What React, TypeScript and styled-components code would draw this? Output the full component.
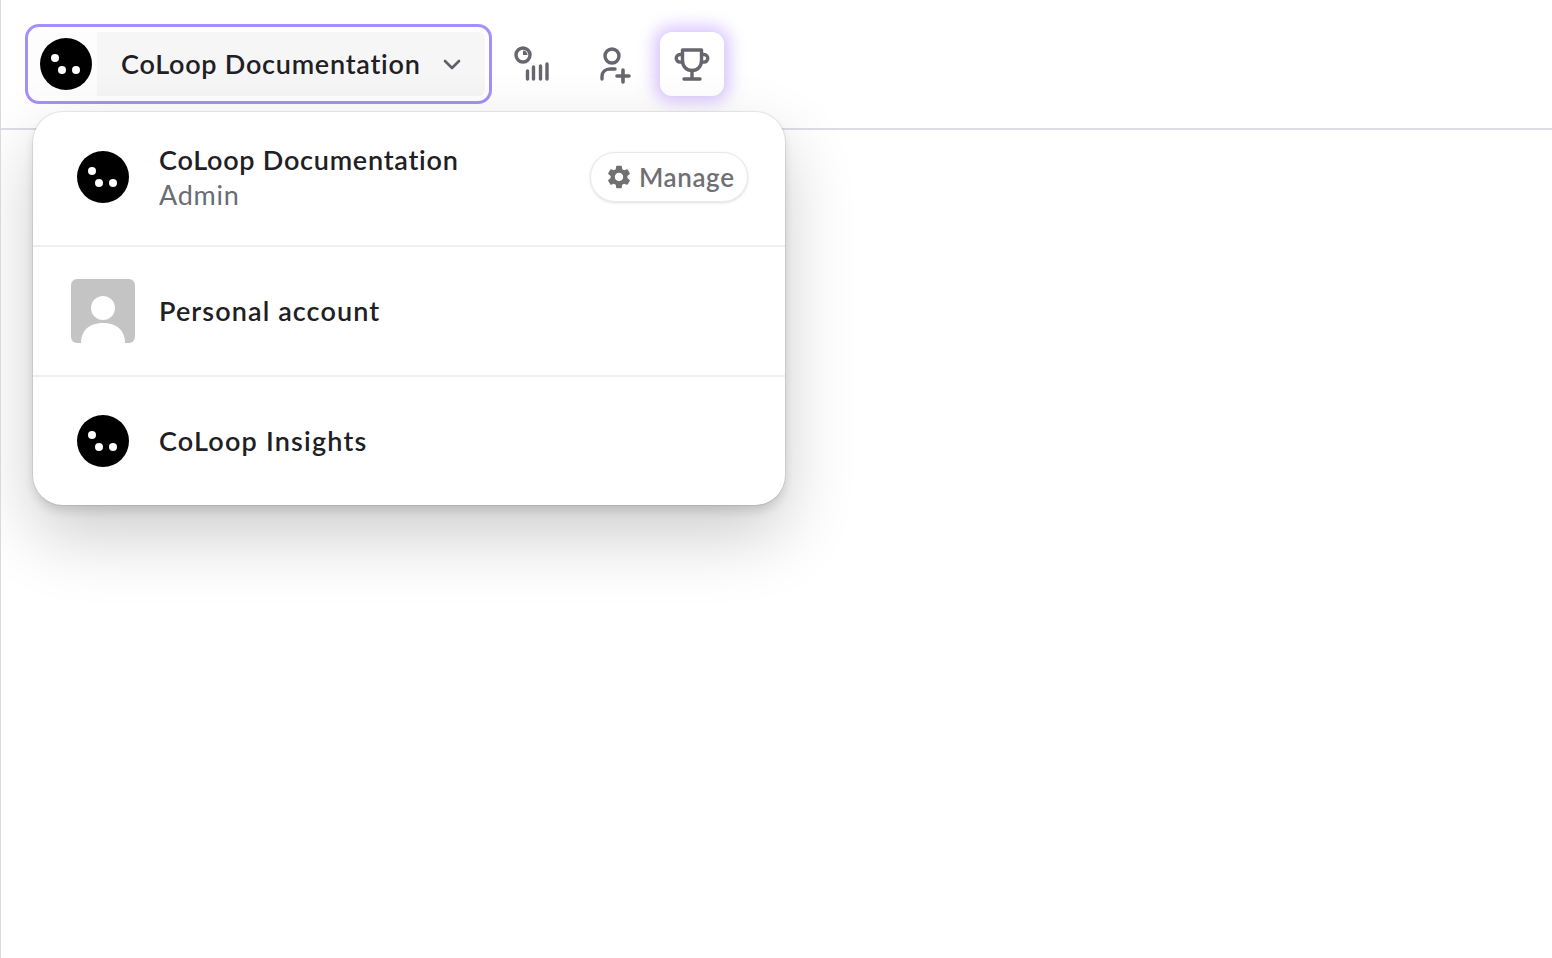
import styled, { createGlobalStyle } from 'styled-components';
import { MdSettings } from 'react-icons/md';

const FONT = `"Lato", "Inter", "Liberation Sans", sans-serif`;

const GlobalStyle = createGlobalStyle`
  html, body {
    margin: 0;
    padding: 0;
    height: 100%;
    background: #fff;
    font-family: ${FONT};
  }
  #root {
    height: 100%;
  }
`;

const Page = styled.div`
  position: relative;
  height: 958px;
  box-sizing: border-box;
  border-left: 1px solid #d9d9e3;
  overflow: hidden;
`;

const Header = styled.header`
  display: flex;
  align-items: center;
  box-sizing: border-box;
  height: 130px;
  padding: 0 0 0 24px;
  border-bottom: 2px solid #dddde6;
`;

const Switcher = styled.button`
  display: flex;
  align-items: center;
  box-sizing: border-box;
  width: 467px;
  height: 80px;
  padding: 0;
  border: 3px solid #a78ffa;
  border-radius: 14px;
  background: #fff;
  outline: none;
  font-family: ${FONT};
`;

const SwitcherInner = styled.span`
  display: flex;
  align-items: center;
  flex: 1;
  height: 64px;
  margin: 0 4px;
  border-radius: 6px;
  background: #f6f6f7;
`;

const LogoTile = styled.span`
  display: flex;
  align-items: center;
  justify-content: center;
  flex: none;
  box-sizing: border-box;
  width: 65px;
  height: 64px;
  padding-left: 3px;
  border-radius: 6px 0 0 6px;
  background: #fdfdfd;
`;

const SwitcherLabel = styled.span`
  flex: 1;
  margin: 0 0 2px 24px;
  text-align: left;
  font-size: 27px;
  font-weight: 600;
  letter-spacing: 0.75px;
  color: #1f2024;
`;

const Chevron = styled.svg`
  flex: none;
  margin-right: 22px;
`;

const IconButton = styled.button<{ $active?: boolean; $offset: number }>`
  display: flex;
  align-items: center;
  justify-content: center;
  flex: none;
  width: 64px;
  height: 64px;
  margin-left: ${(p) => p.$offset}px;
  padding: 0;
  border: none;
  border-radius: 12px;
  background: #fff;
  box-shadow: ${(p) => (p.$active ? '0 0 16px 6px rgba(167, 120, 250, 0.42)' : 'none')};
`;

const Menu = styled.div`
  position: absolute;
  top: 112px;
  left: 32px;
  width: 752px;
  height: 393px;
  display: flex;
  flex-direction: column;
  border-radius: 30px;
  background: #fff;
  box-shadow: 0 0 0 1px rgba(0, 0, 0, 0.07), 0 6px 10px rgba(0, 0, 0, 0.12), 0 30px 70px rgba(0, 0, 0, 0.2);
`;

const Row = styled.div<{ $height: number; $lift?: number }>`
  display: flex;
  align-items: center;
  gap: 24px;
  box-sizing: border-box;
  height: ${(p) => p.$height}px;
  flex: none;
  padding: 0 37px ${(p) => p.$lift ?? 0}px 38px;
  & + & {
    border-top: 2px solid #efeff1;
  }
`;

const LogoSlot = styled.span`
  display: flex;
  align-items: center;
  justify-content: center;
  flex: none;
  width: 64px;
  height: 64px;
`;

const Avatar = styled.svg`
  display: block;
  border-radius: 6px;
`;

const Info = styled.div`
  display: flex;
  flex-direction: column;
  flex: 1;
  gap: 1px;
`;

const Name = styled.div<{ $tracking: number }>`
  font-size: 27px;
  line-height: 34px;
  font-weight: 600;
  letter-spacing: ${(p) => p.$tracking}px;
  color: #1f2024;
`;

const Role = styled.div`
  font-size: 27px;
  line-height: 34px;
  font-weight: 400;
  letter-spacing: 0.75px;
  color: #6b6b74;
`;

const ManageButton = styled.button`
  display: flex;
  align-items: center;
  gap: 6px;
  box-sizing: border-box;
  width: 158px;
  height: 50px;
  padding: 0 0 0 14px;
  border: 1px solid #e9e9ec;
  border-radius: 25px;
  background: #fff;
  box-shadow: 0 1px 3px rgba(0, 0, 0, 0.13);
  font-family: ${FONT};
  font-size: 26px;
  font-weight: 600;
  letter-spacing: 0.6px;
  color: #6f6f74;
  svg {
    flex: none;
  }
`;

const Logo = () => (
  <svg width="52" height="52" viewBox="0 0 52 52">
    <circle cx="26" cy="26" r="26" fill="#000" />
    <circle cx="15" cy="20" r="4" fill="#fff" />
    <circle cx="22" cy="32" r="4" fill="#fff" />
    <circle cx="36" cy="32" r="4" fill="#fff" />
  </svg>
);

const ChartIcon = () => (
  <svg width="64" height="64" viewBox="0 0 64 64" fill="none" stroke="#66666e" strokeWidth="3.4" strokeLinecap="round">
    <circle cx="22" cy="23" r="7" />
    <path d="M22 23v-4.500a4.500 4.500 0 0 1 4.500 4.500z" fill="#66666e" stroke="none" />
    <path d="M26.500 39v8M32.500 35v12M39.500 34v13M46 32v15" />
  </svg>
);

const UserPlusIcon = () => (
  <svg width="64" height="64" viewBox="0 0 64 64" fill="none" stroke="#66666e" strokeWidth="3.4" strokeLinecap="round">
    <circle cx="30" cy="24" r="7" />
    <path d="M20 47v-2.500c0-4.500 3.500-7.500 8-7.500h5" />
    <path d="M41 38v12M35 44h12" strokeWidth="3.6" />
  </svg>
);

const TrophyIcon = () => (
  <svg width="64" height="64" viewBox="0 0 64 64" fill="none" stroke="#66666e" strokeWidth="3.4" strokeLinecap="round" strokeLinejoin="round">
    <path d="M22.500 18h19v11c0 5.500-4 9.500-9.500 9.500s-9.500-4-9.500-9.500z" />
    <path d="M22.500 22.500H20a3.800 3.800 0 0 0 0 7.600h2.500" />
    <path d="M41.500 22.500H44a3.800 3.800 0 0 1 0 7.600h-2.500" />
    <path d="M32 38.500V47M24 47h16" />
  </svg>
);

const PersonAvatar = () => (
  <Avatar width="64" height="64" viewBox="0 0 64 64">
    <rect width="64" height="64" fill="#c4c4c4" />
    <circle cx="32" cy="29" r="12" fill="#fff" />
    <path d="M10 64c0-14 10-20 22-20s22 6 22 20z" fill="#fff" />
  </Avatar>
);

const App = () => (
  <>
    <GlobalStyle />
    <Page>
      <Header>
        <Switcher>
          <SwitcherInner>
            <LogoTile>
              <Logo />
            </LogoTile>
            <SwitcherLabel>CoLoop Documentation</SwitcherLabel>
            <Chevron width="22" height="22" viewBox="0 0 22 22" fill="none" stroke="#5f5f66" strokeWidth="2.600" strokeLinecap="round" strokeLinejoin="round">
              <path d="M4 8l7 7 7-7" />
            </Chevron>
          </SwitcherInner>
        </Switcher>
        <IconButton $offset={9}>
          <ChartIcon />
        </IconButton>
        <IconButton $offset={17}>
          <UserPlusIcon />
        </IconButton>
        <IconButton $active $offset={14}>
          <TrophyIcon />
        </IconButton>
      </Header>
      <Menu>
        <Row $height={133} $lift={3}>
          <LogoSlot>
            <Logo />
          </LogoSlot>
          <Info>
            <Name $tracking={0.75}>CoLoop Documentation</Name>
            <Role>Admin</Role>
          </Info>
          <ManageButton>
            <MdSettings size={28} />
            Manage
          </ManageButton>
        </Row>
        <Row $height={130} $lift={1}>
          <LogoSlot>
            <PersonAvatar />
          </LogoSlot>
          <Name $tracking={1.1}>Personal account</Name>
        </Row>
        <Row $height={130} $lift={1}>
          <LogoSlot>
            <Logo />
          </LogoSlot>
          <Name $tracking={1.2}>CoLoop Insights</Name>
        </Row>
      </Menu>
    </Page>
  </>
);

export default App;
